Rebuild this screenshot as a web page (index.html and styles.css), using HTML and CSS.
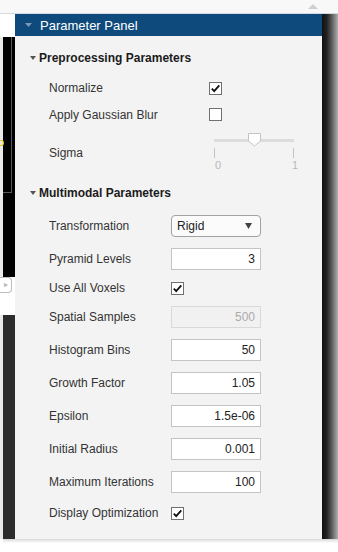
FILE: index.html
```html
<!DOCTYPE html>
<html>
<head>
<meta charset="utf-8">
<link rel="stylesheet" href="styles.css">
</head>
<body>
<div class="top"><span class="scroll-up"></span></div>
<div class="main">
  <div class="side">
    <div class="side-white"></div>
    <div class="side-black"><div class="side-frame"><span class="dot"></span></div></div>
    <div class="side-tab"><span class="tab">&#9656;</span></div>
    <div class="side-white2"></div>
    <div class="side-dark"></div>
  </div>
  <div class="panel">
    <div class="panel-header">
      <svg class="hdr-tri" width="7" height="4" viewBox="0 0 7 4"><path d="M0 0H7L3.5 4Z" fill="#7f98b4"/></svg>
      <span>Parameter Panel</span>
    </div>

    <div class="sec sec1">
      <svg width="6" height="4" viewBox="0 0 6 4"><path d="M0 0H6L3 4Z" fill="#555"/></svg>
      <span>Preprocessing Parameters</span>
    </div>
    <div class="pre">
      <span class="lbl">Normalize</span>
      <svg class="cb" width="13" height="13" viewBox="0 0 13 13"><rect x="0.5" y="0.5" width="12" height="12" fill="#fff" stroke="#707070"/><path d="M2.8 6.6L5.2 9.2L10.3 3.4" fill="none" stroke="#111" stroke-width="1.8"/></svg>
      <span class="lbl">Apply Gaussian Blur</span>
      <svg class="cb" width="13" height="13" viewBox="0 0 13 13"><rect x="0.5" y="0.5" width="12" height="12" fill="#fff" stroke="#707070"/></svg>
      <span class="lbl">Sigma</span>
      <div class="slider">
        <div class="track-wrap">
          <span class="track"></span>
          <svg class="thumb" width="13" height="14" viewBox="0 0 13 14"><path d="M0.5 0.5H12.5V8L6.5 13L0.5 8Z" fill="#fff" stroke="#c4c4c4"/></svg>
        </div>
        <div class="ticks"><span class="tick"></span><span class="tick"></span></div>
        <div class="tick-labels"><span>0</span><span>1</span></div>
      </div>
    </div>

    <div class="sec sec2">
      <svg width="6" height="4" viewBox="0 0 6 4"><path d="M0 0H6L3 4Z" fill="#555"/></svg>
      <span>Multimodal Parameters</span>
    </div>
    <div class="multi">
      <span class="lbl">Transformation</span>
      <div class="dd"><span>Rigid</span><svg width="7" height="6" viewBox="0 0 7 6"><path d="M0 0H7L3.5 6Z" fill="#444"/></svg></div>

      <span class="lbl">Pyramid Levels</span>
      <div class="inp">3</div>

      <span class="lbl cbrow">Use All Voxels</span>
      <svg class="cb cbrow" width="13" height="13" viewBox="0 0 13 13"><rect x="0.5" y="0.5" width="12" height="12" fill="#fff" stroke="#707070"/><path d="M2.8 6.6L5.2 9.2L10.3 3.4" fill="none" stroke="#111" stroke-width="1.8"/></svg>

      <span class="lbl">Spatial Samples</span>
      <div class="inp disabled">500</div>

      <span class="lbl">Histogram Bins</span>
      <div class="inp">50</div>

      <span class="lbl">Growth Factor</span>
      <div class="inp">1.05</div>

      <span class="lbl">Epsilon</span>
      <div class="inp">1.5e-06</div>

      <span class="lbl">Initial Radius</span>
      <div class="inp">0.001</div>

      <span class="lbl">Maximum Iterations</span>
      <div class="inp">100</div>

      <span class="lbl cbrow last">Display Optimization</span>
      <svg class="cb cbrow last" width="13" height="13" viewBox="0 0 13 13"><rect x="0.5" y="0.5" width="12" height="12" fill="#fff" stroke="#707070"/><path d="M2.8 6.6L5.2 9.2L10.3 3.4" fill="none" stroke="#111" stroke-width="1.8"/></svg>
    </div>
  </div>
  <div class="shadow"></div>
</div>
<div class="bottom-fade"></div>
</body>
</html>
```

FILE: styles.css
```css
html, body {
  margin: 0;
  padding: 0;
}
body {
  width: 338px;
  height: 552px;
  overflow: hidden;
  background: #fff;
  font-family: "Liberation Sans", Arial, sans-serif;
}

.top {
  height: 13px;
  background: #f8f8f8;
  border-bottom: 1px solid #d3d9e0;
  display: flex;
  justify-content: flex-end;
  align-items: center;
  padding-right: 20px;
}
.scroll-up {
  width: 0;
  height: 0;
  border-left: 5px solid transparent;
  border-right: 5px solid transparent;
  border-bottom: 5px solid #cfcfcf;
}

.main {
  display: flex;
  height: 525px;
}

/* left background app strip */
.side {
  width: 15px;
  display: flex;
  flex-direction: column;
  background: #e9e9e9;
}
.side-white {
  height: 23px;
  background: #fff;
}
.side-black {
  height: 240px;
  margin-left: 3px;
  background: #000;
}
.side-frame {
  position: relative;
  width: 8px;
  height: 155px;
  border-right: 1px solid #5a5a5a;
  border-bottom: 1px solid #5a5a5a;
}
.dot {
  position: absolute;
  left: -3px;
  top: 103px;
  width: 4px;
  height: 6px;
  border-radius: 0 3px 3px 0;
  border: 1px solid #e8c800;
  border-left: none;
  box-sizing: border-box;
}
.side-tab {
  height: 16px;
  display: flex;
  background: #fff;
}
.tab {
  width: 12px;
  height: 16px;
  box-sizing: border-box;
  border: 1px solid #bdbdbd;
  border-left: none;
  border-radius: 0 4px 4px 0;
  background: #fff;
  color: #b5b5b5;
  font-size: 8px;
  line-height: 14px;
  text-align: center;
}
.side-white2 {
  height: 22px;
  background: #fff;
}
.side-dark {
  flex: 1;
  margin-left: 3px;
  background: #2c2c2c;
}

/* panel */
.panel {
  width: 307px;
  background: #f3f3f3;
  color: #333;
  font-size: 12px;
}
.panel-header {
  height: 22px;
  background: #0f4a7c;
  color: #fff;
  font-size: 13px;
  display: flex;
  align-items: center;
  gap: 8px;
  padding-left: 10px;
}

.sec {
  display: flex;
  align-items: center;
  gap: 3px;
  height: 16px;
  padding-left: 15px;
  font-weight: bold;
  font-size: 12px;
  color: #1b1b1b;
}
.sec1 { margin-top: 14px; }
.sec2 { margin-top: 7px; }

.pre {
  display: grid;
  grid-template-columns: 160px auto;
  grid-template-rows: 26px 27px 50px;
  align-items: center;
  margin-top: 9px;
  padding-left: 34px;
}
.lbl {
  color: #333;
  white-space: nowrap;
}
.cb {
  display: block;
}

.slider {
  align-self: stretch;
  width: 85px;
  margin-left: 5px;
  padding-top: 5px;
  box-sizing: border-box;
}
.track-wrap {
  position: relative;
  height: 14px;
}
.track {
  position: absolute;
  left: 0;
  top: 6px;
  width: 80px;
  height: 3px;
  background: #dcdcdc;
}
.thumb {
  position: absolute;
  left: 34px;
  top: 0;
}
.ticks {
  display: flex;
  justify-content: space-between;
  width: 80px;
  height: 10px;
  margin-top: 1px;
}
.tick {
  width: 1px;
  height: 10px;
  background: #c2c2c2;
}
.tick-labels {
  display: flex;
  justify-content: space-between;
  width: 84px;
  margin-top: 1px;
  font-size: 11px;
  line-height: 13px;
  color: #b8b8b8;
  padding-left: 1px;
  box-sizing: border-box;
}

.multi {
  display: grid;
  grid-template-columns: 122px 90px;
  row-gap: 11px;
  align-items: center;
  margin-top: 14px;
  padding-left: 34px;
}
.multi .cbrow {
  height: 14px;
  line-height: 14px;
}
.multi svg.cbrow {
  height: 13px;
}
.multi .last {
  margin-top: 2px;
}

.dd {
  width: 90px;
  height: 22px;
  box-sizing: border-box;
  border: 1px solid #a2a2a2;
  border-radius: 4px;
  background: #fbfbfb;
  display: flex;
  align-items: center;
  justify-content: space-between;
  padding: 0 8px 0 5px;
  color: #222;
}
.inp {
  width: 90px;
  height: 22px;
  box-sizing: border-box;
  border: 1px solid #c4c4c4;
  background: #fff;
  text-align: right;
  padding-right: 5px;
  line-height: 20px;
  color: #222;
}
.inp.disabled {
  background: #f1f1f1;
  border-color: #d9d9d9;
  color: #ababab;
}

.shadow {
  flex: 1;
  background: linear-gradient(to right, #101010 0%, #222 30%, #5a5a5a 60%, #b0b0b0 100%);
}

.bottom-fade {
  height: 4px;
  margin-left: 3px;
  background: linear-gradient(to bottom, #d8d8d8, #fff);
}
```
